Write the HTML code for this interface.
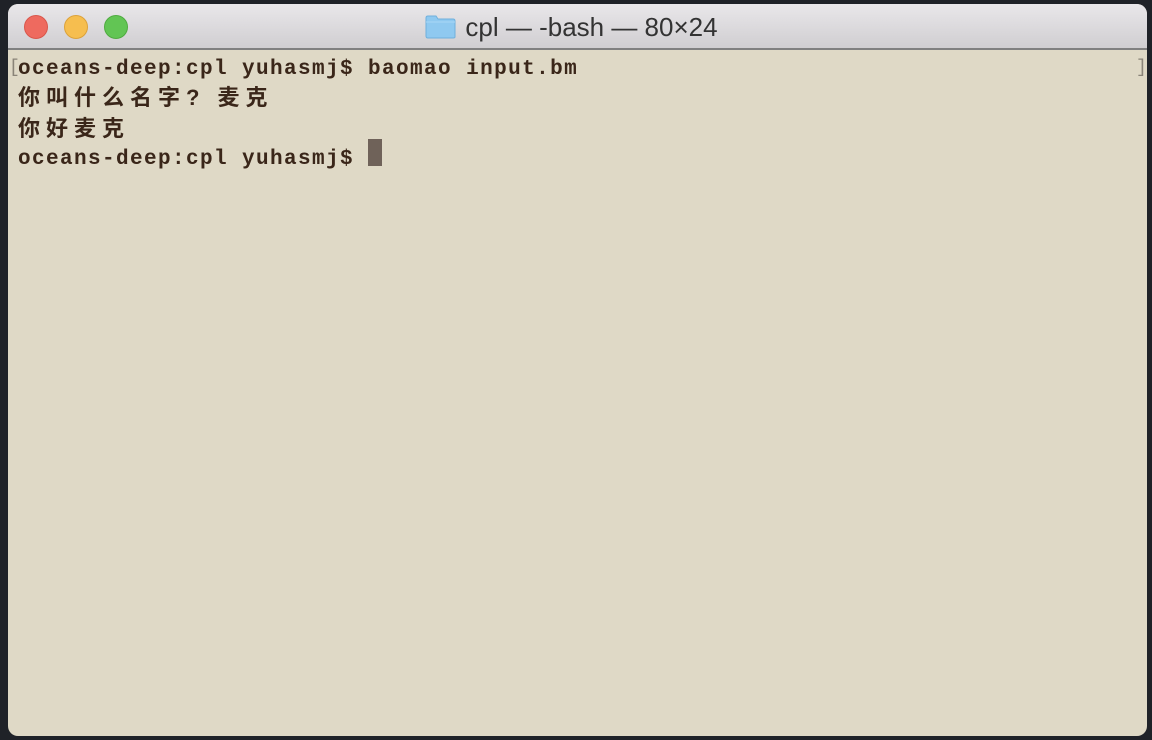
<!DOCTYPE html>
<html><head><meta charset="utf-8"><style>
html,body{margin:0;padding:0}
body{width:1152px;height:740px;background:#1f2228;position:relative;overflow:hidden}
.win{position:absolute;left:8px;top:4px;width:1139px;height:732px;border-radius:10px;overflow:hidden;background:#dfd9c6}
.title{position:absolute;left:0;top:0;width:100%;height:44px;background:linear-gradient(#e9e7ea,#d0ced1);border-bottom:2px solid #808080}
.dot{position:absolute;top:11px;width:23px;height:23px;border-radius:50%}
.t{position:absolute;left:-6px;width:100%;top:8px;text-align:center;font:26px "Liberation Sans",sans-serif;color:#333}
.t svg{vertical-align:-3px;margin-right:9px}
.term{position:absolute;left:10px;top:52px;font:bold 21px/28px "Liberation Mono",monospace;letter-spacing:1.4px;color:#3a2619;white-space:pre}
.cjk{font:bold 22px/28px "Liberation Sans","Noto Sans CJK SC",sans-serif;letter-spacing:6px}
.cur{position:absolute;left:360px;top:135px;width:14px;height:27px;background:#6f6259}
.br{position:absolute;font:18px "Liberation Mono",monospace;color:#8a8478}
</style></head><body>
<div class="win">
 <div class="title">
  <div class="dot" style="left:16px;background:#ee6a5f;border:1px solid #d9564b;width:22px;height:22px"></div>
  <div class="dot" style="left:56px;background:#f6be4f;border:1px solid #dca23a;width:22px;height:22px"></div>
  <div class="dot" style="left:96px;background:#62c554;border:1px solid #4fab40;width:22px;height:22px"></div>
  <div class="t"><svg width="31" height="24" viewBox="0 0 31 24"><path d="M1 3 Q1 1 3 1 H11 L13 4 H28 Q30 4 30 6 V22 Q30 23 28 23 H3 Q1 23 1 21 Z" fill="#8fc9f0" stroke="#6fb0dd"/><path d="M1 7 H30" stroke="#a9d7f6"/></svg>cpl — -bash — 80×24</div>
 </div>
 <div class="br" style="left:1px;top:54px">[</div>
 <div class="br" style="left:1128px;top:54px">]</div>
 <div class="term">oceans-deep:cpl yuhasmj$ baomao input.bm
<span class="cjk">你叫什么名字? 麦克</span>
<span class="cjk">你好麦克</span>
oceans-deep:cpl yuhasmj$ </div>
 <div class="cur"></div>
</div>
</body></html>
